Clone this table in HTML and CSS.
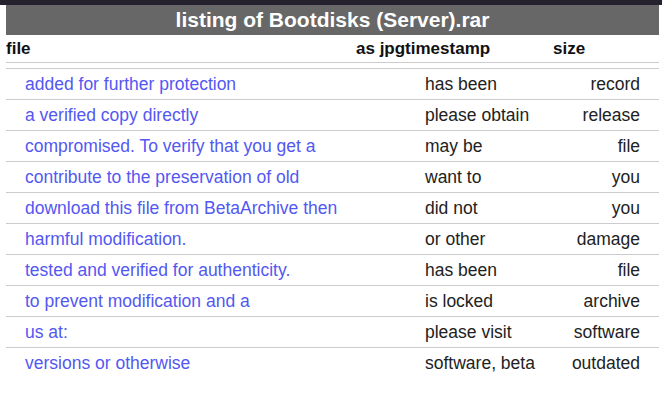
FILE: index.html
```html
<!DOCTYPE html>
<html>
<head>
    <meta charset="UTF-8">
    <title>listing of Bootdisks (Server).rar</title>
    <link rel="stylesheet" href="styles.css">
</head>
<body>
  <div class="topbar"></div>
  <div class="listing">
    <h1 class="title">listing of Bootdisks (Server).rar</h1>
    <div class="head">
      <span>file</span>
      <span>as jpgtimestamp</span>
      <span>size</span>
    </div>
    <div class="rows">
      <div class="row"><a href="#">added for further protection</a><span>has been</span><span class="size">record</span></div>
      <div class="row"><a href="#">a verified copy directly</a><span>please obtain</span><span class="size">release</span></div>
      <div class="row"><a href="#">compromised. To verify that you get a</a><span>may be</span><span class="size">file</span></div>
      <div class="row"><a href="#">contribute to the preservation of old</a><span>want to</span><span class="size">you</span></div>
      <div class="row"><a href="#">download this file from BetaArchive then</a><span>did not</span><span class="size">you</span></div>
      <div class="row"><a href="#">harmful modification.</a><span>or other</span><span class="size">damage</span></div>
      <div class="row"><a href="#">tested and verified for authenticity.</a><span>has been</span><span class="size">file</span></div>
      <div class="row"><a href="#">to prevent modification and a</a><span>is locked</span><span class="size">archive</span></div>
      <div class="row"><a href="#">us at:</a><span>please visit</span><span class="size">software</span></div>
      <div class="row"><a href="#">versions or otherwise</a><span>software, beta</span><span class="size">outdated</span></div>
    </div>
  </div>
</body>
</html>
```

FILE: styles.css
```css
body {
    margin: 0;
    background-color: #fff;
    font-family: "Liberation Sans", Arial, Helvetica, sans-serif;
    color: #222;
}
.topbar {
    height: 5px;
    background-color: #25222d;
}
.listing {
    margin: 0 3px 0 6px;
}
.title {
    margin: 0;
    height: 30px;
    line-height: 30px;
    background-color: #676767;
    color: #fff;
    font-size: 21px;
    font-weight: bold;
    text-align: center;
}
.head {
    display: grid;
    grid-template-columns: 350px 197px 1fr;
    height: 27px;
    line-height: 27px;
    font-size: 17px;
    font-weight: bold;
    color: #111;
    border-bottom: 1px solid #ccc;
}
.rows {
    margin-top: 5px;
    border-top: 1px solid #ccc;
}
.row {
    display: grid;
    grid-template-columns: 400px 1fr auto;
    height: 30px;
    line-height: 30px;
    padding: 0 19px;
    font-size: 17.5px;
    border-bottom: 1px solid #ccc;
}
.row:last-child {
    border-bottom: none;
}
.row a {
    color: #5358f2;
    text-decoration: none;
}
.size {
    text-align: right;
}
```
